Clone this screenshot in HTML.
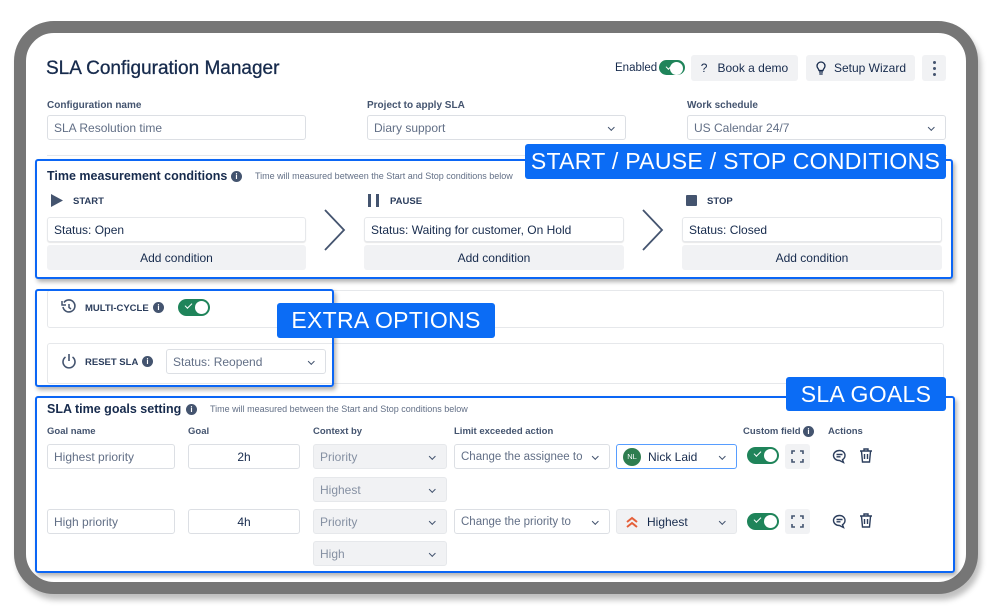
<!DOCTYPE html>
<html><head><meta charset="utf-8"><style>
*{box-sizing:border-box;margin:0;padding:0}
body{width:999px;height:614px;background:#fff;position:relative;overflow:hidden;font-family:"Liberation Sans",sans-serif;color:#172b4d}
.a{position:absolute}
.frame{left:14px;top:21px;width:964px;height:573px;border:12px solid #767676;border-radius:40px;background:#fff;box-shadow:3px 6px 6px rgba(0,0,0,.25)}
.lbl{font-size:10px;color:#44546f;font-weight:bold}
.inp{border:1.5px solid #dcdfe4;border-radius:3px;background:#fff;font-size:12px;color:#626f86;padding:0 6px;display:flex;align-items:center;white-space:nowrap}
.gray{background:#f1f2f4;border-color:#e6e8eb;color:#8590a2}
.chev{position:absolute;right:12px;top:50%;width:4.5px;height:4.5px;border-right:1.6px solid #44546f;border-bottom:1.6px solid #44546f;transform:translateY(-70%) rotate(45deg)}
.btn{background:#f1f2f4;border-radius:3px;font-size:12px;color:#172b4d;display:flex;align-items:center;justify-content:center}
.blue{border:2.5px solid #0b66f5;border-radius:3px;box-shadow:2px 3px 4px rgba(0,0,0,.3)}
.tag{background:#0b6cf5;color:#fff;font-size:23px;border-radius:3px;display:flex;align-items:center;justify-content:center;letter-spacing:.3px}
.info{width:11px;height:11px;border-radius:50%;background:#44546f;color:#fff;font-size:8px;font-weight:bold;text-align:center;line-height:11px}
.sm{font-size:9px;color:#626f86}
.cap{font-size:9.5px;font-weight:bold;color:#2c3e5d}
.tog{width:32px;height:17px;border-radius:9px;background:#1f845a}
.tog::after{content:"";position:absolute;right:2px;top:2px;width:13px;height:13px;border-radius:50%;background:#fff}
.tog::before{content:"";position:absolute;left:7px;top:4px;width:6px;height:3px;border-left:1.6px solid #fff;border-bottom:1.6px solid #fff;transform:rotate(-45deg)}
.card{border:1px solid #e6e8eb;border-radius:3px;background:#fff}
</style></head><body>
<div class="a frame"></div>

<div class="a" style="left:46px;top:58px;font-size:19px;color:#172b4d;-webkit-text-stroke:0.3px #172b4d">SLA Configuration Manager</div>
<div class="a" style="left:615px;top:62px;font-size:11.5px">Enabled</div>
<div class="a tog" style="left:659px;top:60px;width:26px;height:15px"></div>
<div class="a btn" style="left:691px;top:55px;width:107px;height:26px">?&nbsp;&nbsp; Book a demo</div>
<div class="a btn" style="left:806px;top:55px;width:109px;height:26px"><svg width="12" height="14" viewBox="0 0 12 14" style="margin-right:7px"><path d="M4 11h4M4.3 13h3.4M4 9.5C4 8 2 7 2 5a4 4 0 018 0c0 2-2 3-2 4.5z" fill="none" stroke="#172b4d" stroke-width="1.3"/></svg>Setup Wizard</div>
<div class="a btn" style="left:922px;top:55px;width:24px;height:26px;flex-direction:column;gap:3px"><i style="width:3px;height:3px;background:#44546f;border-radius:50%"></i><i style="width:3px;height:3px;background:#44546f;border-radius:50%"></i><i style="width:3px;height:3px;background:#44546f;border-radius:50%"></i></div>

<div class="a lbl" style="left:47px;top:100px">Configuration name</div>
<div class="a lbl" style="left:367px;top:100px">Project to apply SLA</div>
<div class="a lbl" style="left:687px;top:100px">Work schedule</div>
<div class="a inp" style="left:47px;top:115px;width:259px;height:25px">SLA Resolution time</div>
<div class="a inp" style="left:367px;top:115px;width:259px;height:25px">Diary support<i class="chev"></i></div>
<div class="a inp" style="left:687px;top:115px;width:259px;height:25px">US Calendar 24/7<i class="chev"></i></div>
<div class="a" style="left:47px;top:155px;width:900px;height:1px;background:#e6e8eb"></div>

<!-- time measurement -->
<div class="a blue" style="left:35px;top:159px;width:918px;height:120px"></div>
<div class="a" style="left:47px;top:169px;font-size:12.5px;font-weight:bold">Time measurement conditions</div>
<div class="a info" style="left:231px;top:171px">i</div>
<div class="a sm" style="left:255px;top:171px">Time will measured between the Start and Stop conditions below</div>
<svg class="a" style="left:51px;top:194px" width="12" height="13"><path d="M0 0L12 6.5 0 13z" fill="#44546f"/></svg>
<div class="a cap" style="left:73px;top:196px">START</div>
<svg class="a" style="left:368px;top:194px" width="12" height="13"><rect x="0" y="0" width="3" height="13" fill="#44546f"/><rect x="8" y="0" width="3" height="13" fill="#44546f"/></svg>
<div class="a cap" style="left:390px;top:196px">PAUSE</div>
<div class="a" style="left:686px;top:195px;width:11px;height:11px;background:#44546f;border-radius:1px"></div>
<div class="a cap" style="left:707px;top:196px">STOP</div>
<div class="a card" style="left:47px;top:217px;width:259px;height:25px;font-size:12px;padding:5px 6px;box-shadow:0 1px 1px rgba(0,0,0,.1)">Status: Open</div>
<div class="a card" style="left:364px;top:217px;width:260px;height:25px;font-size:12px;padding:5px 6px;box-shadow:0 1px 1px rgba(0,0,0,.1)">Status: Waiting for customer, On Hold</div>
<div class="a card" style="left:682px;top:217px;width:260px;height:25px;font-size:12px;padding:5px 6px;box-shadow:0 1px 1px rgba(0,0,0,.1)">Status: Closed</div>
<div class="a btn" style="left:47px;top:245px;width:259px;height:25px">Add condition</div>
<div class="a btn" style="left:364px;top:245px;width:260px;height:25px">Add condition</div>
<div class="a btn" style="left:682px;top:245px;width:260px;height:25px">Add condition</div>
<svg class="a" style="left:322px;top:208px" width="26" height="44"><path d="M3 2L22 22 3 42" fill="none" stroke="#44546f" stroke-width="1.8"/></svg>
<svg class="a" style="left:640px;top:208px" width="26" height="44"><path d="M3 2L22 22 3 42" fill="none" stroke="#44546f" stroke-width="1.8"/></svg>
<div class="a tag" style="left:525px;top:144px;width:421px;height:35px">START / PAUSE / STOP CONDITIONS</div>

<!-- extra options -->
<div class="a card" style="left:47px;top:290px;width:897px;height:38px"></div>
<div class="a card" style="left:47px;top:343px;width:897px;height:41px"></div>
<div class="a blue" style="left:35px;top:289px;width:299px;height:98px"></div>
<svg class="a" style="left:61px;top:299px" width="16" height="16" viewBox="0 0 16 16"><path d="M3 3.5A6 6 0 1 1 2 8" fill="none" stroke="#44546f" stroke-width="1.6"/><path d="M1 2v4h4" fill="none" stroke="#44546f" stroke-width="1.5"/><path d="M8 5v3.5l2 1.5" fill="none" stroke="#44546f" stroke-width="1.5"/></svg>
<div class="a cap" style="left:85px;top:303px">MULTI-CYCLE</div>
<div class="a info" style="left:153px;top:302px">i</div>
<div class="a tog" style="left:178px;top:299px"></div>
<svg class="a" style="left:61px;top:353px" width="16" height="17" viewBox="0 0 16 17"><path d="M4.5 4A6 6 0 1 0 11.5 4" fill="none" stroke="#44546f" stroke-width="1.6"/><path d="M8 1v7" stroke="#44546f" stroke-width="1.6"/></svg>
<div class="a cap" style="left:85px;top:357px">RESET SLA</div>
<div class="a info" style="left:142px;top:356px">i</div>
<div class="a inp" style="left:166px;top:349px;width:160px;height:25px">Status: Reopend<i class="chev"></i></div>
<div class="a tag" style="left:277px;top:303px;width:218px;height:35px">EXTRA OPTIONS</div>

<!-- goals -->
<div class="a blue" style="left:35px;top:396px;width:920px;height:177px"></div>
<div class="a" style="left:47px;top:402px;font-size:12.5px;font-weight:bold">SLA time goals setting</div>
<div class="a info" style="left:186px;top:404px">i</div>
<div class="a sm" style="left:210px;top:404px">Time will measured between the Start and Stop conditions below</div>
<div class="a lbl" style="left:47px;top:426px;font-size:9.5px">Goal name</div>
<div class="a lbl" style="left:188px;top:426px;font-size:9.5px">Goal</div>
<div class="a lbl" style="left:313px;top:426px;font-size:9.5px">Context by</div>
<div class="a lbl" style="left:454px;top:426px;font-size:9.5px">Limit exceeded action</div>
<div class="a lbl" style="left:743px;top:426px;font-size:9.5px">Custom field</div>
<div class="a info" style="left:803px;top:426px">i</div>
<div class="a lbl" style="left:828px;top:426px;font-size:9.5px">Actions</div>

<div class="a inp" style="left:47px;top:444px;width:128px;height:25px">Highest priority</div>
<div class="a inp" style="left:188px;top:444px;width:112px;height:25px;justify-content:center;color:#172b4d">2h</div>
<div class="a inp gray" style="left:313px;top:444px;width:134px;height:25px">Priority<i class="chev"></i></div>
<div class="a inp gray" style="left:313px;top:477px;width:134px;height:25px">Highest<i class="chev"></i></div>
<div class="a inp" style="left:454px;top:444px;width:156px;height:25px;font-size:11.5px">Change the assignee to<i class="chev"></i></div>
<div class="a inp" style="left:616px;top:444px;width:121px;height:25px;border-color:#579dff;color:#172b4d"><span style="width:18px;height:18px;border-radius:50%;background:#2e7d4f;color:#fff;font-size:7.5px;display:inline-flex;align-items:center;justify-content:center;margin-right:7px">NL</span>Nick Laid<i class="chev"></i></div>
<div class="a tog" style="left:747px;top:447px"></div>
<div class="a btn" style="left:785px;top:444px;width:25px;height:25px"><svg width="13" height="13"><path d="M1 4V1h3M9 1h3v3M12 9v3H9M4 12H1V9" fill="none" stroke="#44546f" stroke-width="1.6"/></svg></div>
<svg class="a" style="left:832px;top:449px" width="15" height="15" viewBox="0 0 15 15"><path d="M7.5 1.5C4 1.5 1.5 3.6 1.5 6.5c0 2.8 2.5 5 6 5l4 2-1-2.8c1.6-1 2.5-2.5 2.5-4.2 0-2.9-2.5-5-5.5-5z M4.5 5.5h6M4.5 7.8h4" fill="none" stroke="#2c3e5d" stroke-width="1.4"/></svg>
<svg class="a" style="left:859px;top:448px" width="14" height="15" viewBox="0 0 14 15"><path d="M1 3h12M5 3V1h4v2M2.5 3.5l1 10.5h7l1-10.5M5.5 6v5M8.5 6v5" fill="none" stroke="#2c3e5d" stroke-width="1.4"/></svg>

<div class="a inp" style="left:47px;top:509px;width:128px;height:25px">High priority</div>
<div class="a inp" style="left:188px;top:509px;width:112px;height:25px;justify-content:center;color:#172b4d">4h</div>
<div class="a inp gray" style="left:313px;top:509px;width:134px;height:25px">Priority<i class="chev"></i></div>
<div class="a inp gray" style="left:313px;top:541px;width:134px;height:25px">High<i class="chev"></i></div>
<div class="a inp" style="left:454px;top:509px;width:156px;height:25px;font-size:11.5px">Change the priority to<i class="chev"></i></div>
<div class="a inp gray" style="left:616px;top:509px;width:121px;height:25px;color:#172b4d"><svg width="14" height="12" style="margin:0 8px 0 2px"><path d="M2 6l5-4 5 4M2 11l5-4 5 4" fill="none" stroke="#e5603a" stroke-width="2"/></svg>Highest<i class="chev"></i></div>
<div class="a tog" style="left:747px;top:513px"></div>
<div class="a btn" style="left:785px;top:509px;width:25px;height:25px"><svg width="13" height="13"><path d="M1 4V1h3M9 1h3v3M12 9v3H9M4 12H1V9" fill="none" stroke="#44546f" stroke-width="1.6"/></svg></div>
<svg class="a" style="left:832px;top:514px" width="15" height="15" viewBox="0 0 15 15"><path d="M7.5 1.5C4 1.5 1.5 3.6 1.5 6.5c0 2.8 2.5 5 6 5l4 2-1-2.8c1.6-1 2.5-2.5 2.5-4.2 0-2.9-2.5-5-5.5-5z M4.5 5.5h6M4.5 7.8h4" fill="none" stroke="#2c3e5d" stroke-width="1.4"/></svg>
<svg class="a" style="left:859px;top:513px" width="14" height="15" viewBox="0 0 14 15"><path d="M1 3h12M5 3V1h4v2M2.5 3.5l1 10.5h7l1-10.5M5.5 6v5M8.5 6v5" fill="none" stroke="#2c3e5d" stroke-width="1.4"/></svg>

<div class="a tag" style="left:786px;top:377px;width:160px;height:34px">SLA GOALS</div>
</body></html>
